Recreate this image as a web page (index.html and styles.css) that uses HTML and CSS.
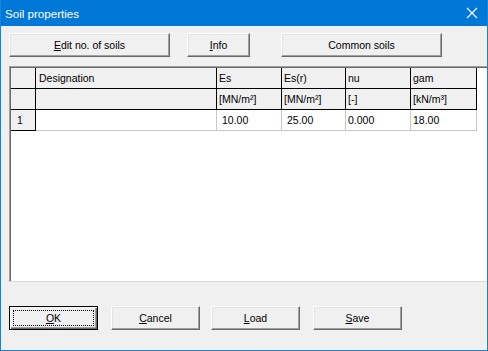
FILE: index.html
```html
<!DOCTYPE html>
<html>
<head>
<meta charset="utf-8">
<link rel="stylesheet" href="styles.css">
</head>
<body>
<div class="window">
  <div class="titlebar">
    <span class="title">Soil properties</span>
    <svg class="close" width="12" height="12" viewBox="0 0 12 12"><path d="M1 1L11 11M11 1L1 11" stroke="#fff" stroke-width="1.1" fill="none"/></svg>
  </div>
  <div class="content">
    <div class="toprow">
      <button class="btn w-edit"><u>E</u>dit no. of soils</button>
      <button class="btn w-info"><u>I</u>nfo</button>
      <button class="btn w-common">Common soils</button>
    </div>
    <div class="grid">
      <div class="table">
        <div class="c hd"></div>
        <div class="c hd">Designation</div>
        <div class="c hd">Es</div>
        <div class="c hd">Es(r)</div>
        <div class="c hd">nu</div>
        <div class="c hd">gam</div>

        <div class="c hd"></div>
        <div class="c hd"></div>
        <div class="c hd">[MN/m²]</div>
        <div class="c hd">[MN/m²]</div>
        <div class="c hd">[-]</div>
        <div class="c hd">[kN/m³]</div>

        <div class="c hd rn">1</div>
        <div class="c dt"></div>
        <div class="c dt ind">10.00</div>
        <div class="c dt ind">25.00</div>
        <div class="c dt">0.000</div>
        <div class="c dt">18.00</div>
      </div>
    </div>
    <div class="botrow">
      <button class="btn w-bot default"><span class="focus"><u>O</u>K</span></button>
      <button class="btn w-bot"><u>C</u>ancel</button>
      <button class="btn w-bot b-load"><u>L</u>oad</button>
      <button class="btn w-bot"><u>S</u>ave</button>
    </div>
  </div>
</div>
</body>
</html>
```
FILE: styles.css
```css
html, body {
  margin: 0;
  padding: 0;
  background: #f0f0f0;
}
.window {
  width: 488px;
  height: 351px;
  box-sizing: border-box;
  border: 1px solid #1883d7;
  border-top: none;
  background: #f0f0f0;
  display: flex;
  flex-direction: column;
  overflow: hidden;
  font-family: "Liberation Sans", Arial, sans-serif;
  font-size: 10.5px;
  color: #000;
}
.titlebar {
  height: 26px;
  flex: none;
  background: #0078d7;
  display: flex;
  align-items: center;
  justify-content: space-between;
  padding: 0 10px 0 5px;
  margin: 0 -1px;
}
.title {
  color: #fff;
  font-size: 11.6px;
  padding-top: 1px;
}
.close {
  display: block;
}
.content {
  flex: 1;
  display: flex;
  flex-direction: column;
  padding: 7px 0 0 8px;
}
.toprow, .botrow {
  display: flex;
  height: 24px;
}
.btn {
  box-sizing: border-box;
  height: 24px;
  padding: 0;
  margin: 0;
  font: inherit;
  color: #000;
  background: #f0f0f0;
  border-style: solid;
  border-width: 1px;
  border-color: #ffffff #696969 #696969 #ffffff;
  box-shadow: inset -1px -1px 0 #a0a0a0, inset 1px 1px 0 #e3e3e3;
  display: flex;
  align-items: center;
  justify-content: center;
}
.btn u {
  text-decoration-thickness: 1px;
  text-underline-offset: 1px;
}
.w-edit { width: 161px; }
.w-info { width: 63px; margin-left: 17px; }
.w-common { width: 161px; margin-left: 31px; }
.grid {
  margin-top: 9px;
  height: 216px;
  box-sizing: border-box;
  background: #fff;
  border-top: 1px solid #a0a0a0;
  border-left: 1px solid #a0a0a0;
  border-bottom: 1px solid #dadada;
  padding: 1px 0 0 1px;
  box-shadow: inset 1px 1px 0 #696969;
}
.table {
  display: grid;
  grid-template-columns: 25px 181px 65px 64px 65px 66px;
  grid-auto-rows: 21px;
}
.c {
  box-sizing: border-box;
  white-space: nowrap;
  line-height: 20px;
  padding-left: 2px;
  overflow: hidden;
}
.hd {
  background: #f0f0f0;
  border-right: 1px solid #000;
  border-bottom: 1px solid #000;
}
.grid .table .c:nth-child(2) { padding-left: 3px; }
.rn { padding-left: 6px; }
.dt {
  background: #fff;
  border-right: 1px solid #c8c8c8;
  border-bottom: 1px solid #c8c8c8;
}
.ind { padding-left: 5px; }
.botrow {
  margin-top: 24px;
}
.w-bot { width: 89px; margin-left: 13px; }
.w-bot:first-child { margin-left: 0; }
.botrow .b-load { margin-left: 11px; }
.default {
  border: 1px solid #000;
  box-shadow: inset 1px 1px 0 #ffffff, inset -1px -1px 0 #696969, inset -2px -2px 0 #a0a0a0;
  padding: 3px;
}
.focus {
  flex: 1;
  align-self: stretch;
  display: flex;
  align-items: center;
  justify-content: center;
  border: 1px dotted #000;
}
```
